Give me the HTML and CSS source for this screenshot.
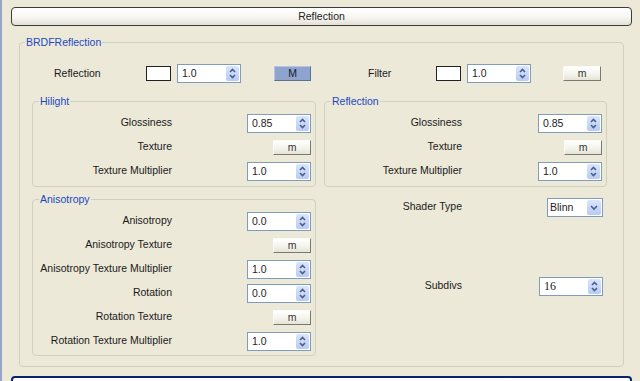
FILE: index.html
```html
<!DOCTYPE html>
<html lang="en">
<head>
    <meta charset="UTF-8">
    <meta name="viewport" content="width=device-width, initial-scale=1.0">
    <title>Reflection</title>
    <link rel="stylesheet" href="styles.css">
</head>
<body>
<div class="panel">
    <!-- rollout header -->
    <div class="rollout">Reflection</div>

    <fieldset class="group brdf">
        <legend>BRDFReflection</legend>

        <!-- top row: colour + amount + map -->
        <div class="top-row">
            <span class="top-label lbl-refl">Reflection</span>
            <span class="swatch"></span>
            <div class="spinner">
                <span class="val">1.0</span>
                <span class="spin"><svg width="13" height="15" viewBox="0 0 13 15"><polyline points="4,6 6.5,3.5 9,6"/><polyline points="4,9 6.5,11.5 9,9"/></svg></span>
            </div>
            <button class="map active map-refl">M</button>
            <span class="top-label lbl-filter">Filter</span>
            <span class="swatch"></span>
            <div class="spinner">
                <span class="val">1.0</span>
                <span class="spin"><svg width="13" height="15" viewBox="0 0 13 15"><polyline points="4,6 6.5,3.5 9,6"/><polyline points="4,9 6.5,11.5 9,9"/></svg></span>
            </div>
            <button class="map map-filter">m</button>
        </div>

        <div class="columns">
            <div class="col">
                <fieldset class="group sub">
                    <legend>Hilight</legend>
                    <div class="prow">
                        <span class="plabel">Glossiness</span>
                        <div class="spinner">
                            <span class="val">0.85</span>
                            <span class="spin"><svg width="13" height="15" viewBox="0 0 13 15"><polyline points="4,6 6.5,3.5 9,6"/><polyline points="4,9 6.5,11.5 9,9"/></svg></span>
                        </div>
                    </div>
                    <div class="prow">
                        <span class="plabel">Texture</span>
                        <button class="map">m</button>
                    </div>
                    <div class="prow">
                        <span class="plabel">Texture Multiplier</span>
                        <div class="spinner">
                            <span class="val">1.0</span>
                            <span class="spin"><svg width="13" height="15" viewBox="0 0 13 15"><polyline points="4,6 6.5,3.5 9,6"/><polyline points="4,9 6.5,11.5 9,9"/></svg></span>
                        </div>
                    </div>
                </fieldset>

                <fieldset class="group sub aniso">
                    <legend>Anisotropy</legend>
                    <div class="prow">
                        <span class="plabel">Anisotropy</span>
                        <div class="spinner">
                            <span class="val">0.0</span>
                            <span class="spin"><svg width="13" height="15" viewBox="0 0 13 15"><polyline points="4,6 6.5,3.5 9,6"/><polyline points="4,9 6.5,11.5 9,9"/></svg></span>
                        </div>
                    </div>
                    <div class="prow">
                        <span class="plabel">Anisotropy Texture</span>
                        <button class="map">m</button>
                    </div>
                    <div class="prow">
                        <span class="plabel">Anisotropy Texture Multiplier</span>
                        <div class="spinner">
                            <span class="val">1.0</span>
                            <span class="spin"><svg width="13" height="15" viewBox="0 0 13 15"><polyline points="4,6 6.5,3.5 9,6"/><polyline points="4,9 6.5,11.5 9,9"/></svg></span>
                        </div>
                    </div>
                    <div class="prow">
                        <span class="plabel">Rotation</span>
                        <div class="spinner">
                            <span class="val">0.0</span>
                            <span class="spin"><svg width="13" height="15" viewBox="0 0 13 15"><polyline points="4,6 6.5,3.5 9,6"/><polyline points="4,9 6.5,11.5 9,9"/></svg></span>
                        </div>
                    </div>
                    <div class="prow">
                        <span class="plabel">Rotation Texture</span>
                        <button class="map">m</button>
                    </div>
                    <div class="prow">
                        <span class="plabel">Rotation Texture Multiplier</span>
                        <div class="spinner">
                            <span class="val">1.0</span>
                            <span class="spin"><svg width="13" height="15" viewBox="0 0 13 15"><polyline points="4,6 6.5,3.5 9,6"/><polyline points="4,9 6.5,11.5 9,9"/></svg></span>
                        </div>
                    </div>
                </fieldset>
            </div>

            <div class="col right">
                <fieldset class="group sub">
                    <legend>Reflection</legend>
                    <div class="prow">
                        <span class="plabel">Glossiness</span>
                        <div class="spinner">
                            <span class="val">0.85</span>
                            <span class="spin"><svg width="13" height="15" viewBox="0 0 13 15"><polyline points="4,6 6.5,3.5 9,6"/><polyline points="4,9 6.5,11.5 9,9"/></svg></span>
                        </div>
                    </div>
                    <div class="prow">
                        <span class="plabel">Texture</span>
                        <button class="map">m</button>
                    </div>
                    <div class="prow">
                        <span class="plabel">Texture Multiplier</span>
                        <div class="spinner">
                            <span class="val">1.0</span>
                            <span class="spin"><svg width="13" height="15" viewBox="0 0 13 15"><polyline points="4,6 6.5,3.5 9,6"/><polyline points="4,9 6.5,11.5 9,9"/></svg></span>
                        </div>
                    </div>
                </fieldset>

                <div class="prow shader-row">
                    <span class="plabel">Shader Type</span>
                    <div class="dropdown">
                        <span class="val">Blinn</span>
                        <span class="drop"><svg width="14" height="15" viewBox="0 0 14 15"><polyline points="4,6 7,9 10,6"/></svg></span>
                    </div>
                </div>

                <div class="prow subdivs-row">
                    <span class="plabel">Subdivs</span>
                    <div class="spinner">
                        <span class="val serif">16</span>
                        <span class="spin"><svg width="13" height="15" viewBox="0 0 13 15"><polyline points="4,6 6.5,3.5 9,6"/><polyline points="4,9 6.5,11.5 9,9"/></svg></span>
                    </div>
                </div>
            </div>
        </div>
    </fieldset>

    <!-- next rollout, cut off by the window -->
    <div class="rollout next"></div>
</div>
</body>
</html>
```

FILE: styles.css
```css
body {
    margin: 0;
    background: #ece9d8;
    font-family: "Liberation Sans", Arial, sans-serif;
    font-size: 10.5px;
    color: #1a1a1a;
    height: 381px;
    overflow: hidden;
}
.panel {
    border-left: 2px solid #97a6c6;
    height: 381px;
    box-sizing: border-box;
    padding-top: 7px;
}
.rollout {
    margin-left: 9px;
    width: 621px;
    height: 19px;
    box-sizing: border-box;
    border: 1px solid #3c3c3c;
    border-radius: 4px;
    background: linear-gradient(#ffffff, #f7f6f1 55%, #e3e1d5);
    text-align: center;
    line-height: 17px;
    color: #222;
}
.rollout.next {
    margin-top: 9px;
    border: 2px solid #0a246a;
}

/* group boxes */
.group {
    margin: 0;
    padding: 0;
    border: 1px solid #d0d0bf;
    border-radius: 4px;
    min-width: 0;
    box-sizing: border-box;
}
.group legend {
    padding: 0 1px;
    margin-left: 5px;
    line-height: 12px;
    color: #1c47c2;
}
.brdf {
    margin: 10px 0 0 17px;
    width: 605px;
    padding-bottom: 10px;
}
.sub {
    padding: 4px 4px 3px 0;
}
.sub legend {
    margin-left: 6px;
}
.aniso {
    margin-top: 6px;
    padding-bottom: 2px;
}

/* top row */
.top-row {
    display: flex;
    align-items: center;
    height: 24px;
    margin-top: 13px;
}
.lbl-refl {
    margin-left: 34px;
    width: 92px;
}
.lbl-filter {
    margin-left: 57px;
    width: 68px;
}
.swatch {
    width: 25px;
    height: 15px;
    box-sizing: border-box;
    border: 1px solid #222;
    background: #fff;
    margin-right: 6px;
}
.map-refl {
    margin-left: 33px;
}
.map-filter {
    margin-left: 32px;
}

.columns {
    display: grid;
    grid-template-columns: 284px 283px;
    column-gap: 8px;
    padding-left: 12px;
    margin-top: 10px;
}

/* parameter rows */
.prow {
    display: flex;
    align-items: center;
    height: 24px;
}
.plabel {
    width: 139px;
    text-align: right;
    margin-top: -3px;
}
.right .plabel {
    width: 137px;
}
.right > .prow {
    padding-right: 4px;
}
.right > .prow .plabel {
    width: 138px;
}
.prow .spinner,
.prow .map,
.prow .dropdown {
    margin-left: auto;
}
.shader-row {
    margin-top: 8px;
}
.subdivs-row {
    margin-top: 55px;
}

/* controls */
.spinner,
.dropdown {
    display: flex;
    width: 64px;
    height: 19px;
    box-sizing: border-box;
    border: 1px solid #7f9db9;
    background: #fff;
}
.dropdown {
    width: 56px;
}
.spinner .val,
.dropdown .val {
    flex: 1;
    padding-left: 4px;
    line-height: 17px;
    color: #222;
}
.dropdown .val {
    padding-left: 2px;
}
.val.serif {
    font-family: "Liberation Serif", serif;
    font-size: 12px;
}
.spin,
.drop {
    margin: 1px;
    border-radius: 2px;
    background: linear-gradient(#dbe5fc, #b8cbf4);
    display: flex;
}
.spin polyline,
.drop polyline {
    fill: none;
    stroke: #4b5f8d;
    stroke-width: 1.6;
}
.map {
    width: 38px;
    height: 15px;
    padding: 0;
    font: inherit;
    line-height: 12px;
    color: #333;
    border: 1px solid;
    border-color: #fafaf7 #7a7a72 #7a7a72 #fafaf7;
    background: linear-gradient(#ffffff, #f3f2ea 60%, #e6e3d6);
}
.map.active {
    width: 37px;
    color: #1a1a2a;
    background: #8ea3cd;
    border-color: #b7c5e2 #5e6f94 #5e6f94 #b7c5e2;
}
```
